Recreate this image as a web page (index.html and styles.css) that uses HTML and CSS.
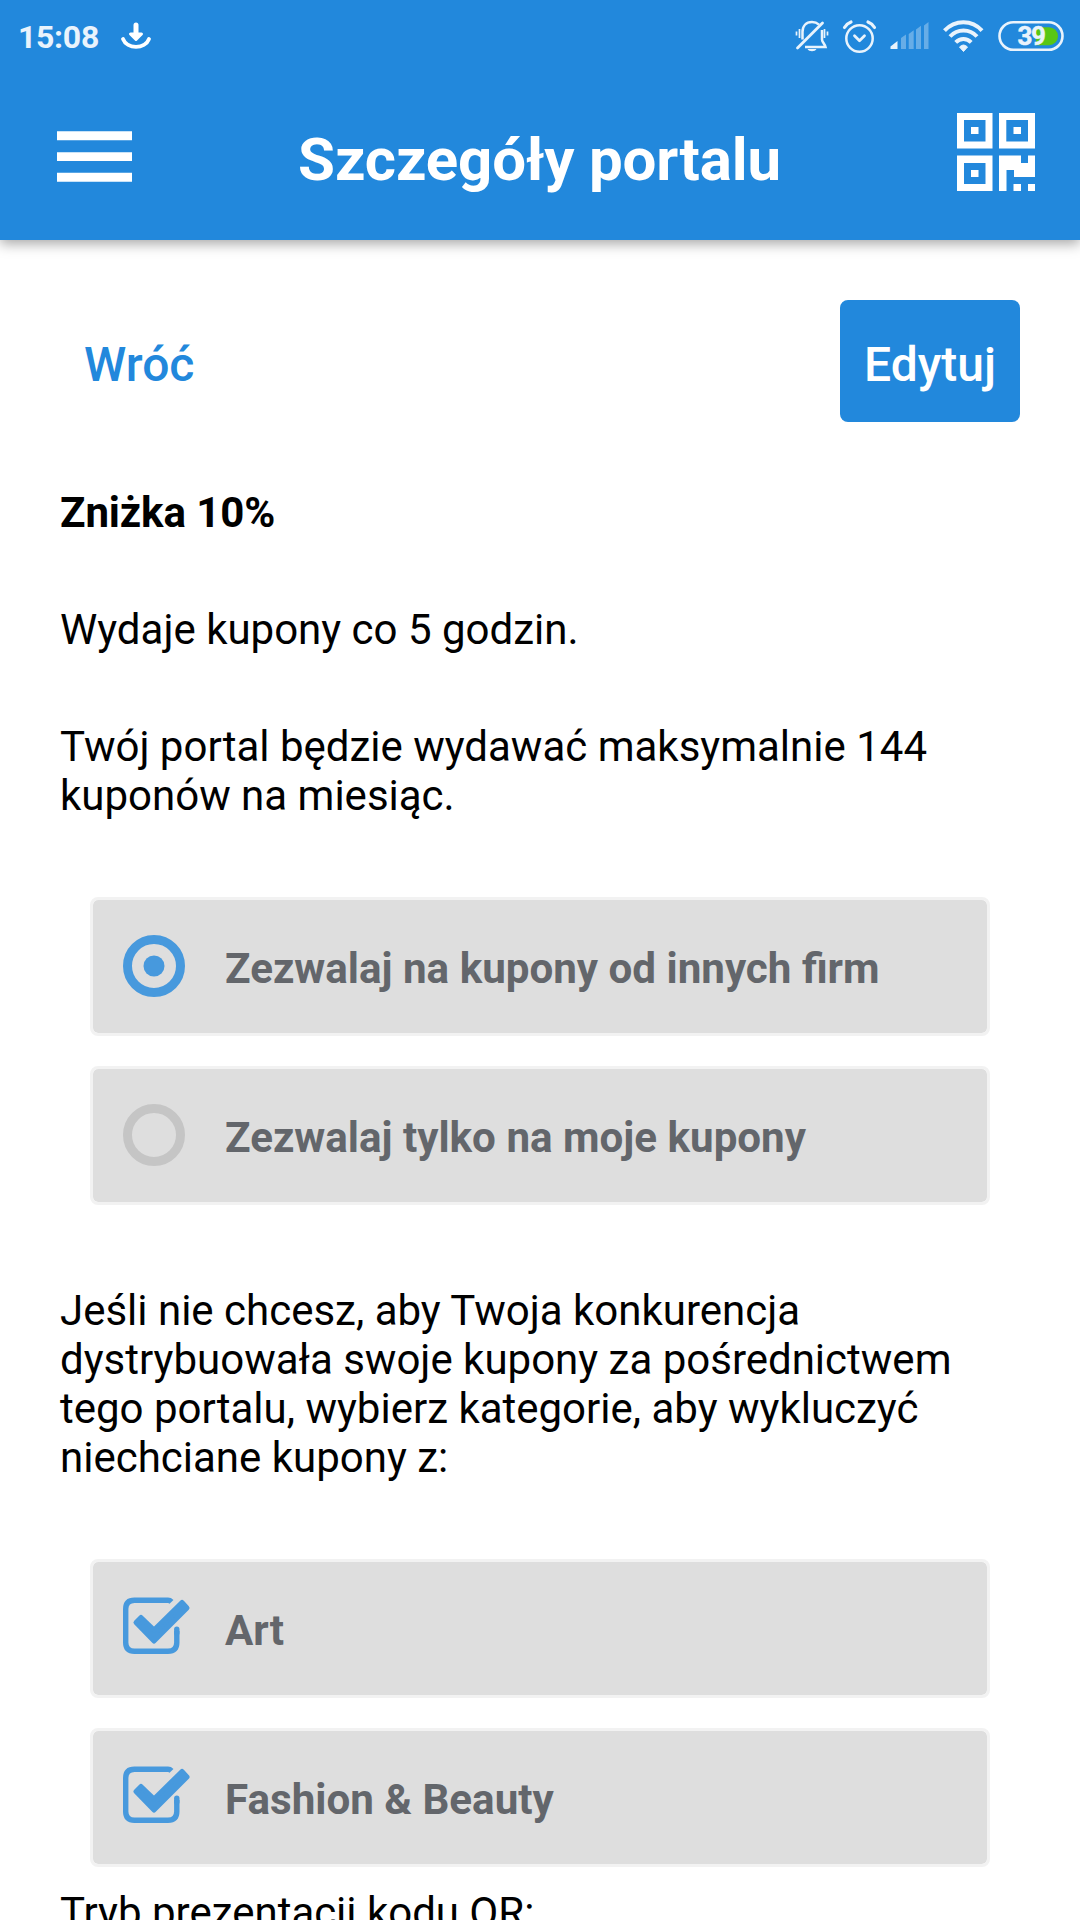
FILE: index.html
```html
<!DOCTYPE html>
<html lang="pl">
<head>
<meta charset="utf-8">
<title>Szczegóły portalu</title>
<link rel="stylesheet" href="styles.css">
</head>
<body>
<header class="header">
  <div class="status">
    <span class="clock">15:08</span>
    <svg class="download" width="32" height="30" viewBox="0 0 32 30" fill="none" stroke="#fff" stroke-linecap="round">
      <path d="M16 5v10" stroke-width="5"/>
      <path d="M10.500 14h11L16 19.500z" fill="#fff" stroke-width="3" stroke-linejoin="round"/>
      <path d="M3 19C7 29.500 25 29.500 29 19" stroke-width="3.800"/>
    </svg>
    <svg class="system" width="275" height="36" viewBox="0 0 275 36" fill="none" stroke="#e9f3fc">
      <g stroke-width="2.500">
        <path d="M7.500 22.500V15c0-6 3.500-10 9.500-10 3 0 5.200 1 7 2.600M27 13v9.500c0 2.500 2.500 4 3.500 7.500H10"/>
        <path d="M2.500 31L27.500 6" stroke-width="2.800" stroke-linecap="round"/>
        <path d="M4.500 12v9M1.500 14.500v4M29.500 12v9M32.500 14.500v4" stroke-width="1.700"/>
        <path d="M12.500 32h9c-1.500 3-7.500 3-9 0z" fill="#e9f3fc" stroke="none"/>
      </g>
      <g stroke-width="2.500">
        <circle cx="64.500" cy="21.500" r="13.200"/>
        <path d="M59.500 18.800l5 5 5-5" stroke-width="2.800" stroke-linecap="round" stroke-linejoin="round"/>
        <path d="M49.500 10.500Q52 6.500 56 5M79.500 10.500Q77 6.500 73 5" stroke-width="3.200" stroke-linecap="round"/>
      </g>
      <g stroke="none" fill="#e9f3fc">
        <path d="M95.500 32v-2.500l7-5.500v8z"/>
        <path d="M106 21l5-3.500V32h-5zM113.700 17l5-3.800V32h-5zM121 12.500l5-3.700V32h-5zM129 8.500l4.500-3.500V32H129z" opacity=".35"/>
      </g>
      <g stroke-width="4">
        <path d="M149.500 13.700C160 2.500 177 2.500 187 13.700M155 19.500c7.500-8 19.500-8 27 0M160.700 25.400c4.500-4.500 11-4.500 15.500 0"/>
        <path d="M164.500 30Q168.500 26 172.500 30L168.500 34.500z" fill="#e9f3fc" stroke-width="1" stroke-linejoin="round"/>
      </g>
      <path d="M241 10.200h13a9 9 0 0 1 0 18h-13z" fill="#59c615" stroke="none"/>
      <rect x="204.500" y="5.200" width="63" height="27.600" rx="13.800" stroke-width="2.600"/>
      <text class="battery-text" x="222.500" y="28">39</text>
    </svg>
  </div>
  <div class="bar">
    <svg class="menu" width="75" height="51" viewBox="0 0 75 51" fill="#fff"><path d="M0 .3h75v8.900H0zM0 21.200h75v8.900H0zM0 41.800h75v8.900H0z"/></svg>
    <h1 class="title">Szczegóły portalu</h1>
    <svg class="qr" width="78" height="78" viewBox="0 0 78 78" fill="#fff" fill-rule="evenodd">
      <path d="M0 0h35.500v35.500H0zM7 7v21.500h21.500V7zM14 14h7.500v7H14z"/>
      <path d="M42 0h36v35.500H42zM49.300 7v21.500H71V7zM56.500 14h7.500v7h-7.500z"/>
      <path d="M0 42.500h35.500V78H0zM7 50v21h21.500V50zM14 57h7.500v7H14z"/>
      <path d="M42 42.500h22V50h7v-7.500h7V64H57v-7h-7.500v21H42zM56.500 71H64v7h-7.500zM71 71h7v7h-7z"/>
    </svg>
  </div>
</header>
<main class="content">
  <div class="actions">
    <a class="back">Wróć</a>
    <button class="edit" type="button">Edytuj</button>
  </div>
  <p class="text name">Zniżka 10%</p>
  <p class="text interval">Wydaje kupony co 5 godzin.</p>
  <p class="text limit">Twój portal będzie wydawać maksymalnie 144<br>kuponów na miesiąc.</p>
  <div class="options">
    <div class="option">
      <svg class="mark" width="68" height="62" viewBox="0 0 68 62"><circle cx="31" cy="31" r="26.500" fill="none" stroke="#4799dd" stroke-width="9"/><circle cx="31" cy="31" r="10.500" fill="#4799dd"/></svg>
      <span class="label">Zezwalaj na kupony od innych firm</span>
    </div>
    <div class="option">
      <svg class="mark" width="68" height="62" viewBox="0 0 68 62"><circle cx="31" cy="31" r="26.500" fill="none" stroke="#c5c5c5" stroke-width="9"/></svg>
      <span class="label">Zezwalaj tylko na moje kupony</span>
    </div>
  </div>
  <p class="text exclude">Jeśli nie chcesz, aby Twoja konkurencja<br>dystrybuowała swoje kupony za pośrednictwem<br>tego portalu, wybierz kategorie, aby wykluczyć<br>niechciane kupony z:</p>
  <div class="options categories">
    <div class="option">
      <svg class="mark" width="68" height="62" viewBox="0 0 68 62"><path d="M48.500 4.800Q47 3.200 45 3.200H11.500Q2.700 3.200 2.700 12V45.500Q2.700 54.200 11.500 54.200H45Q53.800 54.200 53.800 45.500V34" fill="none" stroke="#4799dd" stroke-width="5.400"/><path d="M53.800 36v-3.800" stroke="#4799dd" stroke-width="5.400" stroke-linecap="round"/><path d="M13 25.500L18 20.500 31 33 59 5.500 64 11 31 44z" fill="#4799dd" stroke="#4799dd" stroke-width="5" stroke-linejoin="round"/></svg>
      <span class="label">Art</span>
    </div>
    <div class="option">
      <svg class="mark" width="68" height="62" viewBox="0 0 68 62"><path d="M48.500 4.800Q47 3.200 45 3.200H11.500Q2.700 3.200 2.700 12V45.500Q2.700 54.200 11.500 54.200H45Q53.800 54.200 53.800 45.500V34" fill="none" stroke="#4799dd" stroke-width="5.400"/><path d="M53.800 36v-3.800" stroke="#4799dd" stroke-width="5.400" stroke-linecap="round"/><path d="M13 25.500L18 20.500 31 33 59 5.500 64 11 31 44z" fill="#4799dd" stroke="#4799dd" stroke-width="5" stroke-linejoin="round"/></svg>
      <span class="label">Fashion &amp; Beauty</span>
    </div>
  </div>
  <p class="text mode">Tryb prezentacji kodu QR:</p>
</main>
</body>
</html>
```
FILE: styles.css
```css
* { box-sizing: border-box; }
body {
  margin: 0;
  width: 1080px;
  height: 1920px;
  overflow: hidden;
  background: #fff;
  color: #000;
  font-family: Roboto, sans-serif;
}
svg { display: block; flex: none; }
p, h1 { margin: 0; }
.header {
  height: 240px;
  background: #2288dc;
  box-shadow: 0 4px 12px rgba(0, 0, 0, .34);
}
.status {
  height: 72px;
  display: flex;
  align-items: flex-start;
  padding: 17px 0 0 18px;
}
.clock {
  width: 101.5px;
  font-size: 32px;
  line-height: 40px;
  font-weight: 700;
  letter-spacing: -.3px;
  color: #e9f3fc;
}
.download { margin-top: 3px; }
.system { margin: 0 10px 0 auto; }
.battery-text {
  font: 700 26px Roboto, sans-serif;
  letter-spacing: -1.500px;
  fill: #e9f3fc;
  stroke: #e9f3fc;
  stroke-width: .5px;
}
.bar {
  height: 168px;
  padding: 41px 45px 0 57px;
  display: flex;
  align-items: flex-start;
}
.menu { margin-top: 18px; }
.title {
  flex: 1;
  margin-top: 12px;
  padding-right: 10px;
  font-size: 60px;
  line-height: 70px;
  font-weight: 700;
  letter-spacing: -.15px;
  text-align: center;
  color: #fff;
  white-space: nowrap;
}
.content { padding: 60px 60px 0; }
.actions {
  display: flex;
  justify-content: space-between;
  height: 122px;
}
.back {
  padding-left: 24px;
  font-size: 48px;
  line-height: 130px;
  font-weight: 500;
  color: #2288dc;
}
.edit {
  width: 180px;
  height: 122px;
  padding: 8px 0 0;
  border: 0;
  border-radius: 8px;
  background: #2288dc;
  color: #fff;
  font: 500 48px/56px Roboto, sans-serif;
}
.text {
  font-size: 42px;
  line-height: 49px;
  white-space: nowrap;
}
.name { margin-top: 66px; font-weight: 700; letter-spacing: -.1px; }
.interval, .limit { margin-top: 68px; }
.options {
  display: flex;
  flex-direction: column;
  gap: 30px;
  padding: 0 30px;
  margin-top: 77px;
}
.option {
  height: 139px;
  display: flex;
  align-items: flex-start;
  padding: 35px 0 0 30px;
  border: 3px solid #f2f2f2;
  border-radius: 8px;
  background: #dedede;
  background-clip: padding-box;
}
.label {
  padding: 9px 0 0 34px;
  font-size: 42.15px;
  line-height: 49px;
  font-weight: 700;
  color: #63666b;
  white-space: nowrap;
}
.exclude { margin-top: 81px; }
.categories { margin-top: 77px; }
.mode { margin-top: 21px; }
```
